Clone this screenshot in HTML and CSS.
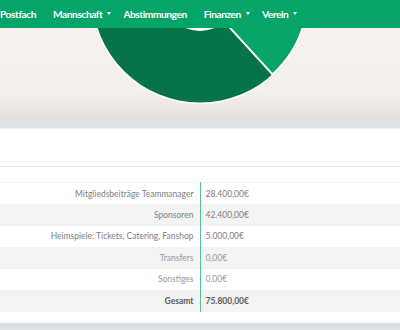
FILE: index.html
```html
<!DOCTYPE html>
<html lang="de">
<head>
<meta charset="utf-8">
<title>Finanzen</title>
<link rel="stylesheet" href="styles.css">
</head>
<body>
<nav class="navbar">
  <ul class="nav-list">
    <li class="nav-item plain">Postfach</li>
    <li class="nav-item">Mannschaft<span class="caret"></span></li>
    <li class="nav-item plain">Abstimmungen</li>
    <li class="nav-item">Finanzen<span class="caret"></span></li>
    <li class="nav-item">Verein<span class="caret"></span></li>
  </ul>
</nav>
<section class="chart-section">
  <svg class="donut" width="400" height="91" viewBox="0 0 400 91" aria-label="Einnahmen">
    <circle cx="200" cy="-33" r="109" fill="#ffffff"/>
    <circle cx="200" cy="-33" r="107.5" fill="#067448"/>
    <path d="M200,-33 L293.5,-87 A107.5,107.5 0 0 1 272.5,46.3 Z" fill="#05a467" stroke="#ffffff" stroke-width="2" stroke-linejoin="round"/>
    <circle cx="200" cy="-33" r="36" fill="#ffffff"/>
  </svg>
</section>
<main class="card">
  <div class="card-header"></div>
  <table class="finance-table">
    <tbody>
      <tr><td class="label">Mitgliedsbeiträge Teammanager</td><td class="value">28.400,00€</td></tr>
      <tr class="alt"><td class="label">Sponsoren</td><td class="value">42.400,00€</td></tr>
      <tr><td class="label">Heimspiele: Tickets, Catering, Fanshop</td><td class="value">5.000,00€</td></tr>
      <tr class="alt muted"><td class="label">Transfers</td><td class="value">0,00€</td></tr>
      <tr class="muted"><td class="label">Sonstiges</td><td class="value">0,00€</td></tr>
      <tr class="alt total"><td class="label">Gesamt</td><td class="value">75.800,00€</td></tr>
    </tbody>
  </table>
</main>
<div class="page-bottom"></div>
</body>
</html>
```
FILE: styles.css
```css
* { box-sizing: border-box; }
html, body { margin: 0; padding: 0; }
body {
  background: #dfe3e7;
  font-family: Lato, "Open Sans", sans-serif;
  width: 400px;
  height: 330px;
  overflow: hidden;
}
.navbar {
  height: 28px;
  background: #05a467;
  position: relative;
  z-index: 2;
}
.nav-list {
  list-style: none;
  margin: 0 0 0 -6px;
  padding: 0;
  display: flex;
  height: 28px;
  align-items: center;
}
.nav-item {
  color: #ffffff;
  font-weight: 700;
  font-size: 10.2px;
  letter-spacing: -0.45px;
  padding: 0 6px;
  line-height: 28px;
  display: flex;
  align-items: center;
  white-space: nowrap;
}
.nav-item.plain { padding-right: 11px; }
.caret {
  display: inline-block;
  width: 0;
  height: 0;
  margin-left: 5px;
  margin-top: -2px;
  border-top: 3px solid #ffffff;
  border-left: 2.5px solid transparent;
  border-right: 2.5px solid transparent;
}
.chart-section {
  height: 91px;
  background: linear-gradient(#f4f1ee 0%, #f2efec 70%, #ebe7e3 90%, #e3dfdb 100%);
  overflow: hidden;
}
.donut { display: block; }
.card {
  margin-top: 10px;
  background: #ffffff;
  padding-bottom: 11px;
  box-shadow: 0 -1px 0 #eef0f2;
}
.card-header {
  height: 38px;
  border-bottom: 1px solid #e2e2e2;
  box-shadow: inset 0 -4px 0 #ffffff, inset 0 -5px 0 #f1f1f1;
}
.finance-table {
  margin-top: 15px;
  width: 100%;
  border-collapse: collapse;
  border-top: 1px solid #f2f2f2;
  font-size: 8.5px;
  font-weight: 400;
  color: #808080;
}
.finance-table td {
  height: 21.5px;
  padding: 0;
  vertical-align: middle;
  white-space: nowrap;
}
.finance-table .label {
  width: 200px;
  text-align: right;
  padding-right: 6px;
  border-right: 1px solid #5bbf9c;
}
.finance-table .value {
  padding-left: 5px;
}
.finance-table .alt td { background: #f3f3f3; }
.finance-table .muted td { color: #9a9a9a; }
.finance-table .total td { color: #5a5a5a; font-weight: 700; }
.page-bottom {
  height: 8px;
  background: linear-gradient(#d5d9dd, #e1e5e9);
}
```
